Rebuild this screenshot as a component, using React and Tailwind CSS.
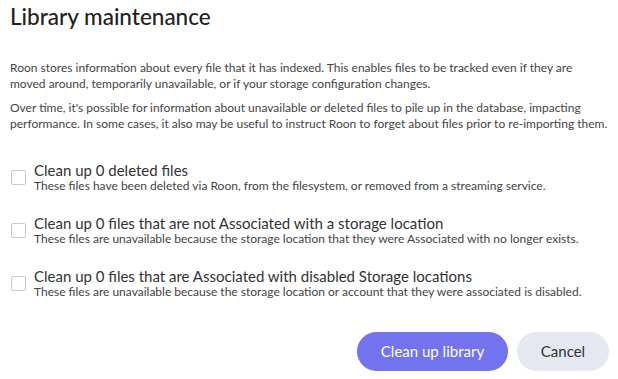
import React from "react";

const items = [
  ["Clean up 0 deleted files", "These files have been deleted via Roon, from the filesystem, or removed from a streaming service."],
  ["Clean up 0 files that are not Associated with a storage location", "These files are unavailable because the storage location that they were Associated with no longer exists."],
  ["Clean up 0 files that are Associated with disabled Storage locations", "These files are unavailable because the storage location or account that they were associated is disabled."],
];

export default function App() {
  return (
    <div className="w-[618px] h-[379px] bg-white font-['Lato',sans-serif] text-[#222] pl-[10px] pr-[8px] overflow-hidden">
      <h1 className="text-[22.5px] font-medium leading-[26px] pt-[4px] text-[#222]">Library maintenance</h1>
      <div className="mt-[30px] text-[12px] leading-[16px] text-[#444]">
        <p>Roon stores information about every file that it has indexed. This enables files to be tracked even if they are moved around, temporarily unavailable, or if your storage configuration changes.</p>
        <p className="mt-[8px]">Over time, it's possible for information about unavailable or deleted files to pile up in the database, impacting performance. In some cases, it also may be useful to instruct Roon to forget about files prior to re-importing them.</p>
      </div>
      <div className="mt-[29px] flex flex-col gap-[21px]">
        {items.map(([t, d]) => (
          <div key={t} className="flex items-start">
            <div className="w-[15px] h-[15px] mt-[9px] ml-[1px] mr-[8px] border-[1.5px] border-[#c8c8c8] rounded-[2px] shrink-0" />
            <div>
              <div className="text-[15px] leading-[18px] text-[#333]">{t}</div>
              <div className="text-[12px] leading-[14px] text-[#444]">{d}</div>
            </div>
          </div>
        ))}
      </div>
      <div className="mt-[33px] flex justify-end gap-[9px] pr-[1px]">
        <button className="h-[39px] w-[151px] rounded-full bg-[#7373f0] text-white text-[15px]">Clean up library</button>
        <button className="h-[39px] w-[92px] rounded-full bg-[#e5e8f0] text-[#333] text-[15px]">Cancel</button>
      </div>
    </div>
  );
}
